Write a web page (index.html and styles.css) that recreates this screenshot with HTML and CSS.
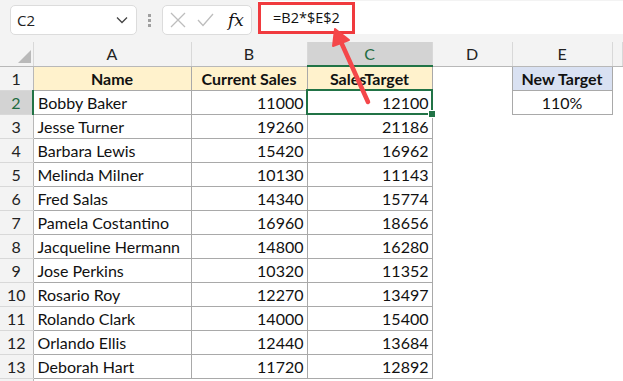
FILE: index.html
```html
<!DOCTYPE html>
<html lang="en">
<head>
  <meta charset="UTF-8" />
  <title>Sales Target</title>
  <link rel="stylesheet" href="styles.css">
</head>
<body>

  <div class="toolbar">
    <div class="namebox">
      <span>C2</span>
      <svg width="12" height="8" viewBox="0 0 12 8"><path d="M1 1.5 L6 6.5 L11 1.5" fill="none" stroke="#444" stroke-width="1.3"/></svg>
    </div>
    <div class="grip"><i></i><i></i><i></i></div>
    <div class="fxbox">
      <svg width="16" height="16" viewBox="0 0 16 16"><path d="M1 1 L15 15 M15 1 L1 15" stroke="#bdbdbd" stroke-width="1.3"/></svg>
      <svg width="17" height="14" viewBox="0 0 17 14"><path d="M1 7 L6 12.5 L16 1" fill="none" stroke="#bdbdbd" stroke-width="1.3"/></svg>
      <span class="fx">fx</span>
    </div>
    <div class="formula">
      <span class="formula-text">=B2*$E$2</span>
    </div>
  </div>

  <table class="sheet">
    <colgroup>
      <col class="c-head"><col class="c-a"><col class="c-b"><col class="c-c"><col class="c-d"><col class="c-e"><col>
    </colgroup>
    <thead>
      <tr>
        <th class="corner"><span class="tri"></span></th>
        <th>A</th><th>B</th><th class="sel">C</th><th>D</th><th>E</th><th></th>
      </tr>
    </thead>
    <tbody id="rows"></tbody>
  </table>

  <!-- active cell C2 -->
  <div class="cursor"><span class="handle"></span></div>

  <svg class="arrow" width="623" height="381" viewBox="0 0 623 381">
    <line x1="368" y1="102" x2="341" y2="42" stroke="#f4474a" stroke-width="4.5" stroke-linecap="round"/>
    <path d="M335 29 L349 40 L333 46 Z" fill="#f4474a" stroke="#f4474a" stroke-width="2" stroke-linejoin="round"/>
  </svg>

  <script>
    const people = [
      ["Bobby Baker", 11000, 12100],
      ["Jesse Turner", 19260, 21186],
      ["Barbara Lewis", 15420, 16962],
      ["Melinda Milner", 10130, 11143],
      ["Fred Salas", 14340, 15774],
      ["Pamela Costantino", 16960, 18656],
      ["Jacqueline Hermann", 14800, 16280],
      ["Jose Perkins", 10320, 11352],
      ["Rosario Roy", 12270, 13497],
      ["Rolando Clark", 14000, 15400],
      ["Orlando Ellis", 12440, 13684],
      ["Deborah Hart", 11720, 12892]
    ];

    let html = '<tr><th class="rh">1</th>' +
      '<td class="t hd">Name</td><td class="t hd">Current Sales</td><td class="t hd">SalesTarget</td>' +
      '<td></td><td class="t hd2">New Target</td><td></td></tr>';

    people.forEach(function (p, i) {
      const n = i + 2;
      html += '<tr><th class="rh' + (n === 2 ? ' sel-row' : '') + '">' + n + '</th>' +
        '<td class="t">' + p[0] + '</td>' +
        '<td class="t num">' + p[1] + '</td>' +
        '<td class="t num">' + p[2] + '</td>' +
        '<td></td>' +
        (n === 2 ? '<td class="t mid">110%</td>' : '<td></td>') +
        '<td></td></tr>';
    });
    html += '<tr><th class="rh"></th><td></td><td></td><td></td><td></td><td></td><td></td></tr>';

    document.getElementById('rows').innerHTML = html;
  </script>

</body>
</html>
```

FILE: styles.css
```css
body {
  margin: 0;
  background: #fff;
  font-family: Lato, "Liberation Sans", sans-serif;
  overflow: hidden;
  position: relative;
  height: 381px;
}

.toolbar {
  height: 42px;
  background: #f3f3f3;
  display: flex;
  align-items: flex-start;
  box-sizing: border-box;
}

.namebox {
  margin: 5px 0 0 10px;
  width: 127px;
  height: 30px;
  box-sizing: border-box;
  background: #fff;
  border: 1px solid #dcdcdc;
  border-radius: 5px;
  display: flex;
  align-items: center;
  justify-content: space-between;
  padding: 0 8px 0 6px;
  font-family: "Open Sans", sans-serif;
  font-size: 15px;
  color: #222;
}

.grip {
  margin: 14px 0 0 11px;
  display: flex;
  flex-direction: column;
  gap: 2px;
}

.grip i {
  width: 3px;
  height: 3px;
  background: #a0a0a0;
}

.fxbox {
  margin: 5px 0 0 11px;
  width: 90px;
  height: 30px;
  box-sizing: border-box;
  background: #fff;
  border: 1px solid #dcdcdc;
  border-radius: 5px;
  display: flex;
  align-items: center;
  gap: 11px;
  padding: 0 0 0 7px;
}

.fx {
  font-family: "DejaVu Serif", serif;
  font-style: italic;
  font-size: 17px;
  color: #111;
  margin-left: 3px;
}

.formula {
  margin: 1px 0 0 6px;
  flex: 1;
  height: 33px;
  background: #fff;
  position: relative;
}

.formula-text {
  position: absolute;
  left: 0;
  top: 1px;
  width: 97px;
  height: 32px;
  box-sizing: border-box;
  border: 3px solid #f03a3e;
  padding-left: 12px;
  line-height: 25px;
  font-family: "Open Sans", sans-serif;
  font-size: 14.5px;
  color: #111;
}

.sheet {
  border-collapse: collapse;
  table-layout: fixed;
  width: 623px;
}

.c-head { width: 33px; }
.c-a { width: 158px; }
.c-b { width: 116px; }
.c-c { width: 125px; }
.c-d { width: 80px; }
.c-e { width: 100px; }

.sheet th,
.sheet td {
  height: 24px;
  padding: 0;
  box-sizing: border-box;
  font-size: 16px;
  white-space: nowrap;
  overflow: hidden;
}

thead th {
  background: #f3f3f3;
  font-weight: normal;
  color: #222;
  text-align: center;
  border-right: 1px solid #d8d8d8;
  border-bottom: 1px solid #b8b8b8;
}

thead th.sel {
  background: #d3d3d3;
  color: #1e6b41;
  border-bottom: 2px solid #217346;
}

.corner {
  position: relative;
}

.tri {
  position: absolute;
  right: 2px;
  bottom: 3px;
  width: 0;
  height: 0;
  border-left: 13px solid transparent;
  border-bottom: 13px solid #b9b9b9;
}

.rh {
  background: #f3f3f3;
  font-weight: normal;
  color: #222;
  text-align: center;
  border-right: 1px solid #b8b8b8;
  border-bottom: 1px solid #d8d8d8;
}

.rh.sel-row {
  background: #d3d3d3;
  color: #1e6b41;
  border-right: 2px solid #217346;
}

.t {
  border: 1px solid #a9a9a9;
  padding: 0 4px !important;
  color: #111;
}

.hd {
  background: #fff2cc;
  font-weight: bold;
  text-align: center;
}

.hd2 {
  background: #d9e1f2;
  font-weight: bold;
  text-align: center;
}

.num {
  text-align: right;
  padding-right: 3px !important;
}

.mid {
  text-align: center;
}

.cursor {
  position: absolute;
  left: 306px;
  top: 89px;
  width: 127px;
  height: 26px;
  box-sizing: border-box;
  border: 2px solid #217346;
  pointer-events: none;
}

.handle {
  position: absolute;
  right: -5px;
  bottom: -5px;
  width: 6px;
  height: 6px;
  background: #217346;
  border: 1px solid #fff;
}

.arrow {
  position: absolute;
  left: 0;
  top: 0;
  pointer-events: none;
}
```
